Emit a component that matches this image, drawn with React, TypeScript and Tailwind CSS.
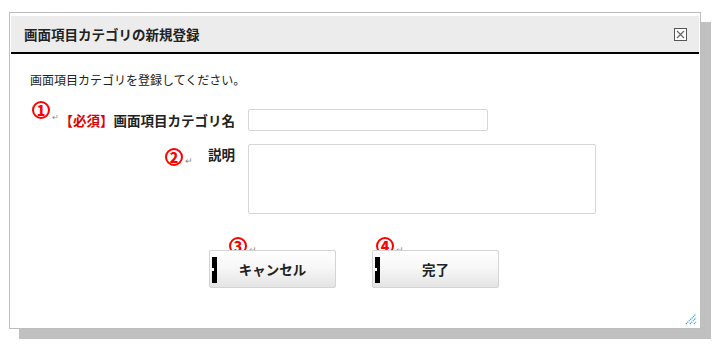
import React from 'react'

const font = { fontFamily: '"MS PGothic", "Noto Sans CJK JP", "Noto Sans", sans-serif' }

function Mark({ n, className, tail = true }: { n: string; className: string; tail?: boolean }) {
  return (
    <span className={`absolute flex items-center ${className}`}>
      <span className="flex h-[18px] w-[18px] items-center justify-center rounded-full border-[2px] border-[#f00] bg-white text-[14px] font-black leading-none text-[#f00]">
        {n}
      </span>
      {tail && <span className="ml-[2px] mt-[6px] text-[9px] leading-none text-[#888]">↵</span>}
    </span>
  )
}

function Btn({ label, mark, markPos }: { label: string; mark: string; markPos: string }) {
  return (
    <div className="relative">
      <Mark n={mark} className={markPos} />
      <button className="relative flex h-[38px] w-[127px] items-center justify-center rounded-[2px] border border-[#d4d4d4] bg-gradient-to-b from-white via-[#f6f6f6] to-[#e4e4e4] text-[13.5px] font-bold text-[#222]">
        <span className="absolute left-[2px] top-[6px] h-[26px] w-[5px] bg-black">
          <span className="absolute left-0 top-[11px] h-[3px] w-[2px] bg-white" />
        </span>
        {label}
      </button>
    </div>
  )
}

export default function App() {
  return (
    <div className="h-[344px] w-[712px] overflow-hidden bg-white pl-[9px] pt-[12px]" style={font}>
      <div className="relative h-[317px] w-[692px] border border-[#bdbdbd] bg-white px-[1px] pt-[3px] shadow-[10px_10px_0_#c0c0c0]">
        <div className="flex h-[38px] items-center justify-between border-b-2 border-black bg-[#ececec] pl-[13px] pr-[12px]">
          <span className="text-[13.5px] font-bold text-[#222]">画面項目カテゴリの新規登録</span>
          <span className="flex h-[13px] w-[13px] items-center justify-center border border-[#555] bg-white">
            <svg width="9" height="9" viewBox="0 0 9 9">
              <path d="M1 1L8 8M8 1L1 8" stroke="#666" strokeWidth="1.2" />
            </svg>
          </span>
        </div>

        <div className="px-[19px] pt-[18px]">
          <p className="text-[12px] leading-[16px] text-[#222]">画面項目カテゴリを登録してください。</p>

          <div className="relative mt-[21px] grid grid-cols-[205px_auto] items-center gap-x-[13px]">
            <Mark n="1" className="-top-[8px] left-[2px]" tail={false} />
            <label className="flex items-center justify-end text-[13.5px] font-bold leading-[16px] text-[#222]">
              <span className="mb-[6px] mr-[1px] text-[8px] font-normal leading-none text-[#888]">↵</span>
              <span className="text-[#d00]">【必須】</span>
              画面項目カテゴリ名
            </label>
            <input className="h-[22px] w-[240px] rounded-[2px] border border-[#d6d6d6] bg-white" />
          </div>

          <div className="relative mt-[13px] grid grid-cols-[205px_auto] items-start gap-x-[13px]">
            <Mark n="2" className="left-[135px] top-[4px]" />
            <label className="pt-[2px] text-right text-[13.5px] font-bold leading-[16px] text-[#222]">説明</label>
            <textarea className="h-[70px] w-[348px] resize-none rounded-[2px] border border-[#d6d6d6] bg-white" />
          </div>

          <div className="mt-[36px] flex justify-center gap-[36px] pr-[2px]">
            <Btn label="キャンセル" mark="3" markPos="-top-[13px] left-[20px]" />
            <Btn label="完了" mark="4" markPos="-top-[13px] left-[4px]" />
          </div>
        </div>

        <svg className="absolute bottom-[3px] right-[3px]" width="12" height="12" viewBox="0 0 12 12">
          <path d="M1 11L11 1M5 11L11 5M9 11L11 9" stroke="#2f9de0" strokeWidth="1.2" strokeDasharray="1.2 0.8" />
        </svg>
      </div>
    </div>
  )
}
